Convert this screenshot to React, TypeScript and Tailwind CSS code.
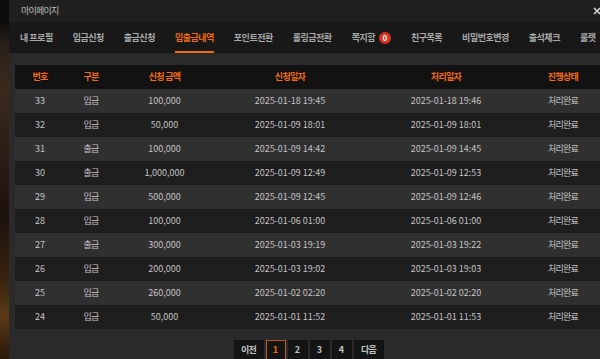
import React from "react";

const rows = [
  ["33", "입금", "100,000", "2025-01-18 19:45", "2025-01-18 19:46"],
  ["32", "입금", "50,000", "2025-01-09 18:01", "2025-01-09 18:01"],
  ["31", "출금", "100,000", "2025-01-09 14:42", "2025-01-09 14:45"],
  ["30", "출금", "1,000,000", "2025-01-09 12:49", "2025-01-09 12:53"],
  ["29", "입금", "500,000", "2025-01-09 12:45", "2025-01-09 12:46"],
  ["28", "입금", "100,000", "2025-01-06 01:00", "2025-01-06 01:00"],
  ["27", "출금", "300,000", "2025-01-03 19:19", "2025-01-03 19:22"],
  ["26", "입금", "200,000", "2025-01-03 19:02", "2025-01-03 19:03"],
  ["25", "입금", "260,000", "2025-01-02 02:20", "2025-01-02 02:20"],
  ["24", "입금", "50,000", "2025-01-01 11:52", "2025-01-01 11:53"],
];

const tabs = ["내 프로필", "입금신청", "출금신청", "입출금내역", "포인트전환", "롤링금전환", "쪽지함", "친구목록", "비밀번호변경", "출석체크", "룰렛"];

const font = { fontFamily: '"Noto Sans CJK KR", "Noto Sans", sans-serif' };

export default function App() {
  return (
    <div className="w-[600px] h-[359px] overflow-hidden flex bg-black" style={font}>
      <div className="w-[9px] shrink-0 h-full bg-[linear-gradient(180deg,#0c0c0c_0%,#0c0c0c_6%,#2a2019_12%,#3a2a1c_25%,#2a1c14_45%,#1c120c_60%,#3a2410_78%,#5a3a18_88%,#2a1808_100%)]" />
      <div className="w-[600px] shrink-0 h-full flex flex-col bg-[#2a2a2a]">
        <div className="h-[22px] shrink-0 bg-[#202020] flex items-center justify-between pl-[12px] pr-[8px]">
          <span className="text-[9px] text-[#bdbdbd] tracking-[-0.8px]">마이페이지</span>
          <svg width="8" height="8" viewBox="0 0 8 8">
            <path d="M1 1L7 7M7 1L1 7" stroke="#d0d0d0" strokeWidth="1.6" />
          </svg>
        </div>
        <div className="h-[31px] shrink-0 bg-[#181818] flex items-stretch pl-[11px] gap-[20px] whitespace-nowrap">
          {tabs.map((t, i) => (
            <div
              key={t}
              className={
                "relative flex items-center pt-[1px] text-[9px] font-bold tracking-[-0.5px] " +
                (i === 3 ? "text-[#f26b12]" : "text-[#a9a9a9]")
              }
            >
              {t}
              {t === "쪽지함" && (
                <span className="ml-[4px] w-[12px] h-[12px] rounded-full bg-[#d9301f] text-white text-[8px] font-bold flex items-center justify-center leading-none tracking-normal">
                  0
                </span>
              )}
              {i === 3 && <div className="absolute left-0 right-0 bottom-[0px] h-[2px] bg-[#f26b12]" />}
            </div>
          ))}
        </div>
        <div className="flex-1 pt-[12px] pl-[6px] flex flex-col">
          <div className="w-[587px] text-[9px]">
            <div className="grid grid-cols-[50px_52px_95px_156px_156px_78px] h-[24px] items-center bg-[#121212] text-[#f26b12] font-bold text-center tracking-[-0.7px]">
              <div>번호</div>
              <div>구분</div>
              <div>신청 금액</div>
              <div>신청일자</div>
              <div>처리일자</div>
              <div>진행상태</div>
            </div>
            {rows.map((r, i) => (
              <div
                key={r[0]}
                className={
                  "grid grid-cols-[50px_52px_95px_156px_156px_78px] h-[24px] items-center text-center text-[#c4c4c4] " +
                  (i % 2 === 0 ? "bg-[#303030]" : "bg-[#1e1e1e]")
                }
              >
                <div>{r[0]}</div>
                <div className="tracking-[-0.8px]">{r[1]}</div>
                <div>{r[2]}</div>
                <div>{r[3]}</div>
                <div>{r[4]}</div>
                <div className="tracking-[-0.8px]">처리완료</div>
              </div>
            ))}
          </div>
          <div className="mt-[11px] flex justify-center gap-[2px] pr-[7px] text-[9px] font-bold">
            <div className="w-[30px] h-[20px] bg-[#141414] text-[#c4c4c4] flex items-center justify-center tracking-[-0.8px]">이전</div>
            <div className="w-[20px] h-[20px] bg-[#141414] border border-[#b85a12] text-[#f26b12] flex items-center justify-center">1</div>
            <div className="w-[20px] h-[20px] bg-[#141414] text-[#c4c4c4] flex items-center justify-center">2</div>
            <div className="w-[20px] h-[20px] bg-[#141414] text-[#c4c4c4] flex items-center justify-center">3</div>
            <div className="w-[20px] h-[20px] bg-[#141414] text-[#c4c4c4] flex items-center justify-center">4</div>
            <div className="w-[30px] h-[20px] bg-[#141414] text-[#c4c4c4] flex items-center justify-center tracking-[-0.8px]">다음</div>
          </div>
        </div>
      </div>
    </div>
  );
}
